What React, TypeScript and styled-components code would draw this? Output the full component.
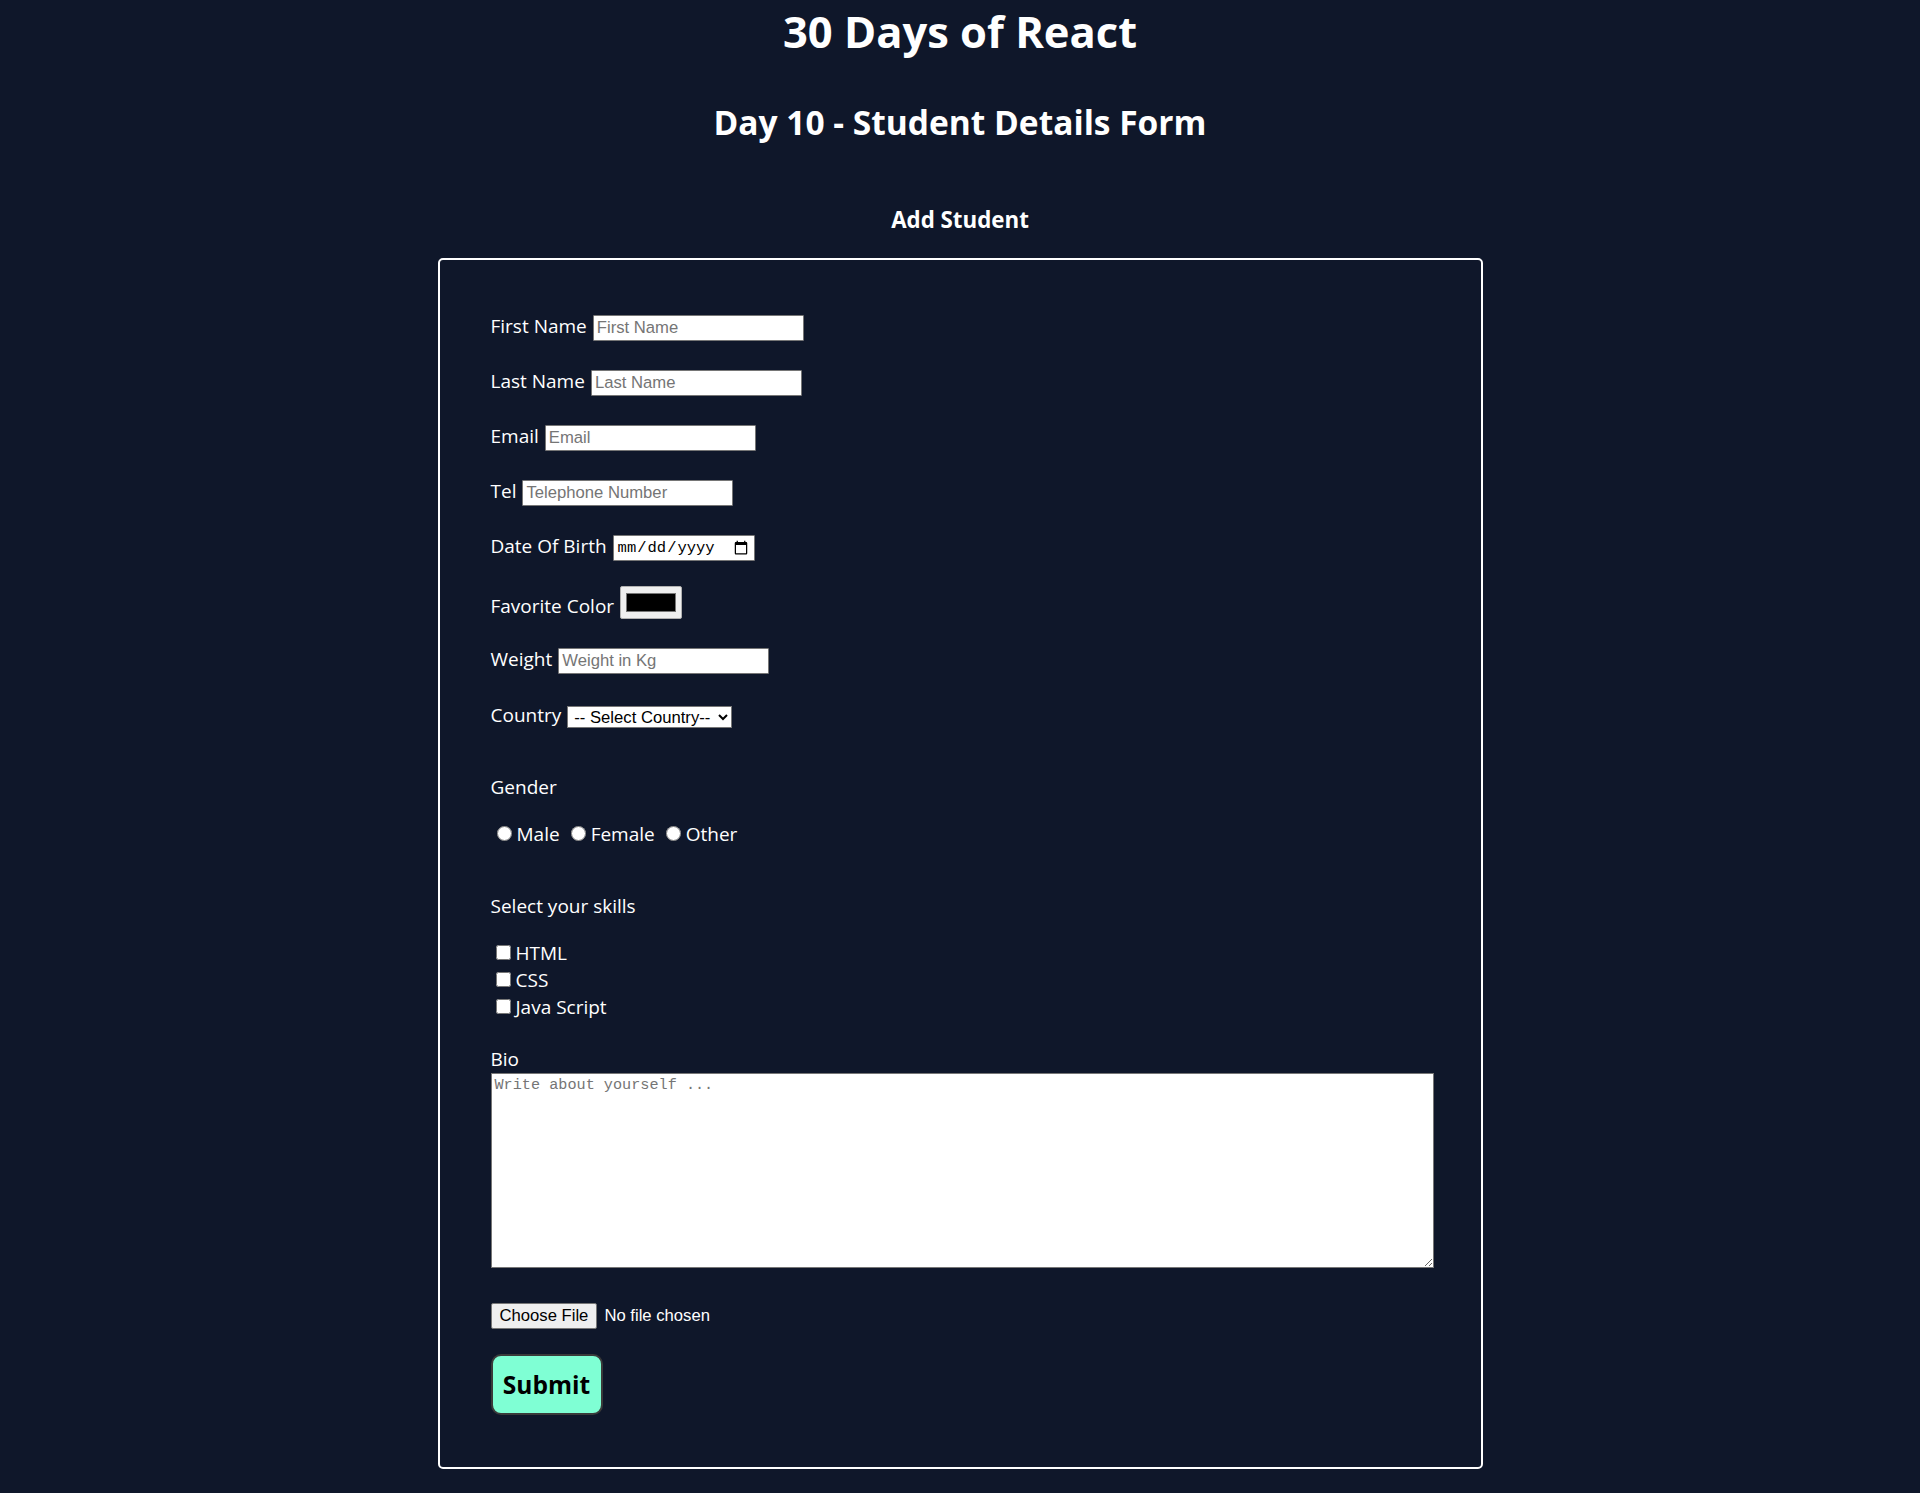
import styled, { createGlobalStyle } from 'styled-components'

const GlobalStyle = createGlobalStyle`
  body {
    margin: 0;
    background: #0f172a;
    color: #ffffff;
    font-family: 'Open Sans', 'Noto Sans', sans-serif;
  }
`

const Page = styled.main`
  display: flex;
  flex-direction: column;
  align-items: center;
  padding: 6px 0 26px;
`

const Title = styled.h1`
  margin: 0;
  font-size: 43.5px;
  line-height: 1.2;
  font-weight: 700;
`

const Subtitle = styled.h2`
  margin: 44px 0 0;
  font-size: 33.5px;
  line-height: 1.2;
  font-weight: 700;
`

const FormTitle = styled.h3`
  margin: 65px 0 0;
  font-size: 22.3px;
  line-height: 1.2;
  font-weight: 700;
`

const Card = styled.form`
  box-sizing: border-box;
  width: 1045px;
  margin-top: 24px;
  border: 2px solid #ffffff;
  border-radius: 5px;
  padding: 54px 50px 52px 51px;
  display: flex;
  flex-direction: column;
  align-items: flex-start;
`

const Row = styled.div<{ $mt?: number }>`
  display: flex;
  align-items: center;
  gap: 6px;
  height: 27px;
  margin-top: ${(p) => p.$mt ?? 28}px;
  font-size: 19px;
`

// $shift moves the label text relative to the centred control (positive = down)
const FieldLabel = styled.label<{ $shift?: number }>`
  white-space: nowrap;
  padding-top: ${(p) => Math.max(0, 2 * (p.$shift ?? -2))}px;
  padding-bottom: ${(p) => Math.max(0, -2 * (p.$shift ?? -2))}px;
`

const Caption = styled.p<{ $mt: number }>`
  margin: ${(p) => p.$mt}px 0 0;
  height: 27px;
  line-height: 27px;
  font-size: 19px;
`

const TextInput = styled.input`
  box-sizing: border-box;
  width: 211px;
  height: 26px;
  padding: 1px 3px;
  border: 1px solid #767676;
  border-radius: 1px;
  background: #ffffff;
  color: #000000;
  font-family: 'Liberation Sans', Arial, sans-serif;
  font-size: 16.67px;
  &::placeholder {
    color: #757575;
  }
`

const DateInput = styled(TextInput)`
  width: 142px;
  font-family: 'Liberation Mono', 'DejaVu Sans Mono', monospace;
  font-size: 15.5px;
`

const ColorInput = styled.input`
  box-sizing: border-box;
  width: 62px;
  height: 33px;
  padding: 2px 3px;
  border: 1px solid #b0b0b0;
  border-radius: 2px;
  background: #efefef;
  cursor: pointer;
  &::-webkit-color-swatch-wrapper {
    padding: 4px 2px;
  }
  &::-webkit-color-swatch {
    border: 1px solid #777777;
  }
`

const CountrySelect = styled.select`
  box-sizing: border-box;
  width: 165px;
  height: 22px;
  padding: 0 2px;
  border: 1px solid #767676;
  border-radius: 0;
  background: #ffffff;
  color: #000000;
  font-family: 'Liberation Sans', Arial, sans-serif;
  font-size: 16.67px;
`

const ChoiceRow = styled.div<{ $mt: number; $gap?: number }>`
  display: flex;
  align-items: center;
  gap: ${(p) => p.$gap ?? 0}px;
  height: 27px;
  margin-top: ${(p) => p.$mt}px;
  font-size: 19px;
`

const Choice = styled.label`
  display: flex;
  align-items: center;
  gap: 5px;
`

const Radio = styled.input`
  width: 15px;
  height: 15px;
  margin: 0 0 0 6px;
`

const Checkbox = styled.input`
  width: 15px;
  height: 15px;
  margin: 0 0 0 5px;
`

const BioArea = styled.textarea`
  box-sizing: border-box;
  width: 943px;
  height: 195px;
  padding: 2px 3px;
  border: 1px solid #767676;
  border-radius: 0;
  background: #ffffff;
  color: #000000;
  font-family: 'Liberation Mono', 'DejaVu Sans Mono', monospace;
  font-size: 15.2px;
  resize: both;
  &::placeholder {
    color: #757575;
  }
`

const FileInput = styled.input`
  margin-top: 35px;
  height: 26px;
  color: #ffffff;
  font-family: 'Liberation Sans', Arial, sans-serif;
  font-size: 16.67px;
  &::file-selector-button {
    box-sizing: border-box;
    height: 26px;
    margin-right: 7px;
    padding: 0 8px;
    border: 1px solid #767676;
    border-radius: 2px;
    background: #efefef;
    color: #000000;
    font-family: 'Liberation Sans', Arial, sans-serif;
    font-size: 16.67px;
  }
`

const SubmitButton = styled.button`
  box-sizing: border-box;
  margin-top: 25px;
  width: 112px;
  height: 61px;
  border: 2px solid #3a3a3a;
  border-radius: 10px;
  background: #7fffd4;
  color: #000000;
  font-family: 'Open Sans', 'Noto Sans', sans-serif;
  font-size: 24.5px;
  font-weight: 700;
  cursor: pointer;
`

const countries = ['Finland', 'Sweden', 'Norway', 'Denmark', 'Iceland']

export default function App() {
  return (
    <>
      <GlobalStyle />
      <Page>
        <Title>30 Days of React</Title>
        <Subtitle>Day 10 - Student Details Form</Subtitle>
        <FormTitle>Add Student</FormTitle>
        <Card onSubmit={(e) => e.preventDefault()}>
          <Row $mt={0}>
            <FieldLabel htmlFor="firstName">First Name</FieldLabel>
            <TextInput id="firstName" type="text" placeholder="First Name" />
          </Row>
          <Row>
            <FieldLabel htmlFor="lastName">Last Name</FieldLabel>
            <TextInput id="lastName" type="text" placeholder="Last Name" />
          </Row>
          <Row>
            <FieldLabel htmlFor="email">Email</FieldLabel>
            <TextInput id="email" type="email" placeholder="Email" />
          </Row>
          <Row>
            <FieldLabel htmlFor="tel">Tel</FieldLabel>
            <TextInput id="tel" type="tel" placeholder="Telephone Number" />
          </Row>
          <Row>
            <FieldLabel htmlFor="dob">Date Of Birth</FieldLabel>
            <DateInput id="dob" type="date" />
          </Row>
          <Row>
            <FieldLabel htmlFor="color" $shift={3}>
              Favorite Color
            </FieldLabel>
            <ColorInput id="color" type="color" defaultValue="#000000" />
          </Row>
          <Row $mt={31}>
            <FieldLabel htmlFor="weight">Weight</FieldLabel>
            <TextInput id="weight" type="number" placeholder="Weight in Kg" />
          </Row>
          <Row $mt={29}>
            <FieldLabel htmlFor="country">Country</FieldLabel>
            <CountrySelect id="country" defaultValue="">
              <option value="">-- Select Country--</option>
              {countries.map((c) => (
                <option key={c} value={c}>
                  {c}
                </option>
              ))}
            </CountrySelect>
          </Row>

          <Caption $mt={44}>Gender</Caption>
          <ChoiceRow $mt={19} $gap={5}>
            <Choice>
              <Radio type="radio" name="gender" value="Male" />
              Male
            </Choice>
            <Choice>
              <Radio type="radio" name="gender" value="Female" />
              Female
            </Choice>
            <Choice>
              <Radio type="radio" name="gender" value="Other" />
              Other
            </Choice>
          </ChoiceRow>

          <Caption $mt={46}>Select your skills</Caption>
          <ChoiceRow $mt={19}>
            <Choice>
              <Checkbox type="checkbox" name="html" />
              HTML
            </Choice>
          </ChoiceRow>
          <ChoiceRow $mt={0}>
            <Choice>
              <Checkbox type="checkbox" name="css" />
              CSS
            </Choice>
          </ChoiceRow>
          <ChoiceRow $mt={0}>
            <Choice>
              <Checkbox type="checkbox" name="javascript" />
              Java Script
            </Choice>
          </ChoiceRow>

          <Caption $mt={26} as="label" htmlFor="bio">
            Bio
          </Caption>
          <BioArea id="bio" placeholder="Write about yourself ..." />

          <FileInput type="file" />
          <SubmitButton type="submit">Submit</SubmitButton>
        </Card>
      </Page>
    </>
  )
}
